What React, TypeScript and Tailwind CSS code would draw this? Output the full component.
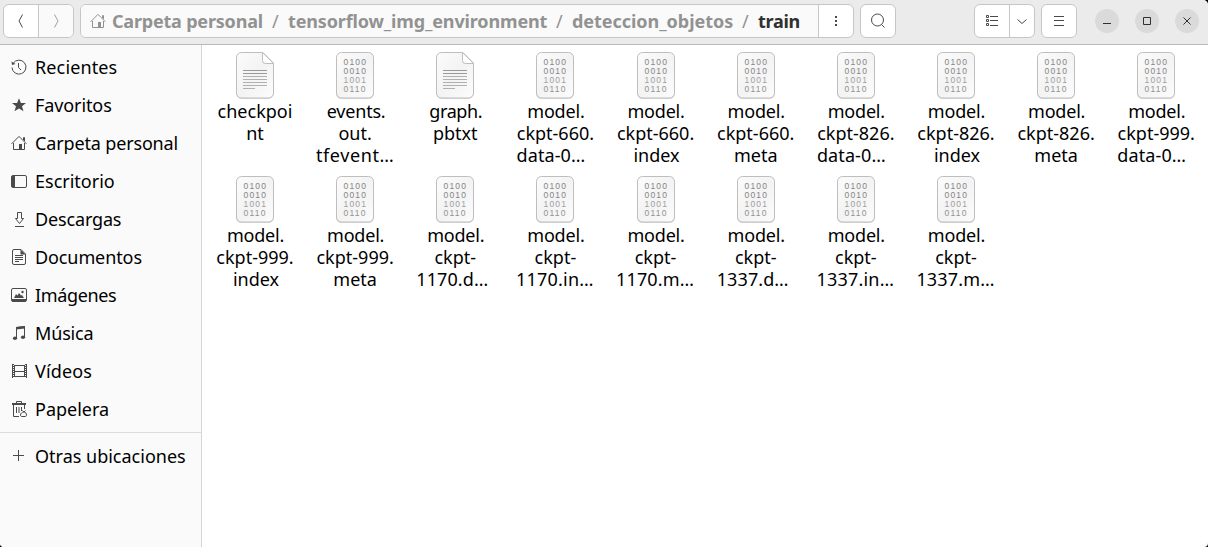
import type { ReactNode } from "react";

function Icon({ children, className = "text-[#4a4a4a]" }: { children: ReactNode; className?: string }) {
  return (
    <svg width="16" height="16" viewBox="0 0 16 16" fill="none" stroke="currentColor" className={`shrink-0 ${className}`}>
      {children}
    </svg>
  );
}

const home = (
  <>
    <path d="M.6 8.8 8 1.4l7.4 7.4M2.500 8v6.500h11V8M12.500 5V2.500h1V6" />
    <path d="M8 9h3v5H8z" fill="currentColor" stroke="none" />
  </>
);

const places: { label: string; tracking: string; icon: ReactNode }[] = [
  {
    label: "Recientes",
    tracking: "tracking-[0.13px]",
    icon: (
      <>
        <path d="M2.200 4.200A7 7 0 1 1 1 8.500" />
        <path d="M.5 2.500 1 6l3.500-1z" fill="currentColor" stroke="none" />
        <path d="M7.500 4v4.500L10 11" />
      </>
    ),
  },
  {
    label: "Favoritos",
    tracking: "tracking-[-0.1px]",
    icon: <path d="m8 1.200 1.900 4.800 5.100.1-4 3.200 1.500 5L8 11.400l-4.500 2.900 1.500-5-4-3.200 5.100-.1z" fill="currentColor" stroke="none" />,
  },
  { label: "Carpeta personal", tracking: "tracking-[-0.15px]", icon: home },
  {
    label: "Escritorio",
    tracking: "tracking-[0px]",
    icon: (
      <>
        <rect x=".5" y="2.500" width="15" height="12" rx="1.500" />
        <path d="M1 3h3v11H1z" fill="currentColor" stroke="none" />
      </>
    ),
  },
  { label: "Descargas", tracking: "tracking-[-0.15px]", icon: <path d="M6.500 1.500h4v6h2l-4 5-4-5h2zM4 15.500h9" /> },
  {
    label: "Documentos",
    tracking: "tracking-[-0.1px]",
    icon: (
      <>
        <path d="M3 .5h7l4.500 4.500v9a1.500 1.500 0 0 1-1.500 1.500H3A1.500 1.500 0 0 1 1.500 14V2A1.500 1.500 0 0 1 3 .5zM4 6.500h8M4 8.500h8M4 10.500h8M4 12.500h4" />
        <path d="M9.500.5v5h5z" fill="currentColor" stroke="none" />
      </>
    ),
  },
  {
    label: "Imágenes",
    tracking: "tracking-[-0.35px]",
    icon: (
      <>
        <rect x=".5" y="1.500" width="15" height="13" rx="1.500" />
        <path d="M1 12h14v2.500H1zM3 11l2-4 1.500 1.500L8 6l2 2.500L11 8l2 3z" fill="currentColor" stroke="none" />
        <circle cx="11.500" cy="5" r="1.200" fill="currentColor" stroke="none" />
      </>
    ),
  },
  {
    label: "Música",
    tracking: "tracking-[-0.15px]",
    icon: (
      <>
        <path d="M5.500 13V2.500l8-1V12" />
        <path d="M5 2l9-1v2.500L5 4.500z" fill="currentColor" stroke="none" />
        <ellipse cx="4" cy="13.300" rx="2.100" ry="1.800" fill="currentColor" stroke="none" />
        <ellipse cx="12" cy="12.300" rx="2.100" ry="1.800" fill="currentColor" stroke="none" />
      </>
    ),
  },
  {
    label: "Vídeos",
    tracking: "tracking-[0.15px]",
    icon: (
      <>
        <path d="M3.500 2v12M13.500 2v12M3 2.500h11M3 8.500h11M3 13.500h11" />
        <path d="M1.500 1v14M15.500 1v14" />
        <path d="M2.500 1v14M14.500 1v14" strokeDasharray="1 1" />
      </>
    ),
  },
  {
    label: "Papelera",
    tracking: "tracking-[0px]",
    icon: (
      <>
        <path d="M5.500 2V.5h5V2M2.500 4v11.500H8M13.500 4v4M5.500 6v6M8 6v6M10.500 6v4" />
        <path d="M1 2h14v2H1z" fill="currentColor" stroke="none" />
        <path d="M11.500 9.500 13 11l1.500-1.500M13 11c-2 0-3.500 1.500-3.500 3 0 1 .5 1.500 1.500 1.500h3c1 0 1.500-.5 1.500-1.500 0-1.500-1-3-2.500-3z" />
      </>
    ),
  },
];

type Kind = "text" | "bin";
const files: { kind: Kind; lines: string[] }[] = [
  { kind: "text", lines: ["checkpoi", "nt"] },
  { kind: "bin", lines: ["events.", "out.", "tfevent…"] },
  { kind: "text", lines: ["graph.", "pbtxt"] },
  { kind: "bin", lines: ["model.", "ckpt-660.", "data-0…"] },
  { kind: "bin", lines: ["model.", "ckpt-660.", "index"] },
  { kind: "bin", lines: ["model.", "ckpt-660.", "meta"] },
  { kind: "bin", lines: ["model.", "ckpt-826.", "data-0…"] },
  { kind: "bin", lines: ["model.", "ckpt-826.", "index"] },
  { kind: "bin", lines: ["model.", "ckpt-826.", "meta"] },
  { kind: "bin", lines: ["model.", "ckpt-999.", "data-0…"] },
  { kind: "bin", lines: ["model.", "ckpt-999.", "index"] },
  { kind: "bin", lines: ["model.", "ckpt-999.", "meta"] },
  { kind: "bin", lines: ["model.", "ckpt-", "1170.d…"] },
  { kind: "bin", lines: ["model.", "ckpt-", "1170.in…"] },
  { kind: "bin", lines: ["model.", "ckpt-", "1170.m…"] },
  { kind: "bin", lines: ["model.", "ckpt-", "1337.d…"] },
  { kind: "bin", lines: ["model.", "ckpt-", "1337.in…"] },
  { kind: "bin", lines: ["model.", "ckpt-", "1337.m…"] },
];

const lineStyle: Record<string, string> = {
  "data-0…": "pr-[9px] tracking-[0.1px]",
  "1170.d…": "pr-[6px] tracking-[0.1px]",
  "1337.d…": "pr-[6px] tracking-[0.1px]",
  "1170.in…": "pr-px tracking-[0.2px]",
  "1337.in…": "pr-px tracking-[0.2px]",
  "1170.m…": "pr-px tracking-[0.15px]",
  "1337.m…": "pr-px tracking-[0.15px]",
  "tfevent…": "tracking-[0.6px]",
  "events.": "tracking-[-0.2px] pl-0.5",
  "graph.": "tracking-[-0.4px] pl-px",
  "model.": "tracking-[-0.2px] pl-px",
  index: "pl-0.5",
};

function FileIcon({ kind }: { kind: Kind }) {
  return (
    <svg width="40" height="48" viewBox="0 0 40 48" className="block">
      <defs>
        <linearGradient id="sheet" x1="0" y1="0" x2="1" y2="1">
          <stop offset="0" stopColor="#fcfcfc" />
          <stop offset=".5" stopColor="#f3f3f3" />
          <stop offset="1" stopColor="#fcfcfc" />
        </linearGradient>
      </defs>
      {kind === "text" ? (
        <>
          <path d="M6.500 1.500h21L38.500 12v30a5 5 0 0 1-5 5h-27a5 5 0 0 1-5-5V6.500a5 5 0 0 1 5-5z" fill="#ddd" />
          <path d="M6.500.5H28L38.500 11v30a5 5 0 0 1-5 5h-27a5 5 0 0 1-5-5V5.500a5 5 0 0 1 5-5z" fill="url(#sheet)" stroke="#bebebe" />
          <path d="M27.500.6V8.500a3 3 0 0 0 3 3h7.900z" fill="#fff" stroke="#bebebe" />
          <path d="M8 18.500h24M8 21.500h24" stroke="#999" />
          <path d="M8 24.500h24M8 27.500h24M8 30.500h24M8 33.500h24M8 36.500h12" stroke="#b0b0b0" />
        </>
      ) : (
        <>
          <rect x="1" y="1.500" width="38" height="45.500" rx="5.500" fill="#ddd" />
          <rect x="1.500" y=".5" width="37" height="45.500" rx="5" fill="url(#sheet)" stroke="#bebebe" />
          <g fontFamily="'Liberation Sans', sans-serif" fontSize="8.500" letterSpacing="1.200" fill="#858585">
            <text x="8.500" y="13">0100</text>
            <text x="8.500" y="22">0010</text>
            <text x="8.500" y="31" fill="#a0a0a0">1001</text>
            <text x="8.500" y="40" fill="#929292">0110</text>
          </g>
        </>
      )}
    </svg>
  );
}

const box = "flex h-[34px] rounded-[6px] border border-[#c6c6c6] bg-white";

export default function App() {
  return (
    <div className="bg-black">
      <div className="flex h-[547px] w-[1208px] flex-col overflow-hidden rounded-bl-[4px] rounded-br-[4px] rounded-tr-[5px] bg-white font-['Noto_Sans',sans-serif] text-[18px] text-black">
        <header className="flex h-[45px] shrink-0 items-start border-b border-[#b9b9b9] bg-[#ebebeb] pl-[3px] pr-[9px] pt-1">
          <div className={`${box} w-[71px] overflow-hidden`}>
            <div className="flex w-[35px] items-center justify-center border-r border-[#c6c6c6]">
              <Icon><path d="M9.500 1.500 6 8l3.500 6.500" /></Icon>
            </div>
            <div className="flex flex-1 items-center justify-center bg-[#fafafa]">
              <Icon className="text-[#a0a0a0]"><path d="M6.500 1.500 10 8l-3.500 6.500" /></Icon>
            </div>
          </div>
          <div className={`${box} ml-[6px] w-[774px] overflow-hidden`}>
            <div className="flex flex-1 items-center whitespace-pre bg-[#fafafa] pl-[9px] font-bold text-[#929292]">
              <Icon className="text-[#929292]">{home}</Icon>
              <span className="ml-[6px] w-[160px] tracking-[-0.2px]">Carpeta personal</span>
              <span className="w-4 font-normal">/</span>
              <span className="w-[268px] tracking-[-0.14px]">tensorflow_img_environment</span>
              <span className="w-4 font-normal">/</span>
              <span className="w-[170px] tracking-[-0.04px]">deteccion_objetos</span>
              <span className="w-4 font-normal">/</span>
              <span className="tracking-[-0.3px] text-[#303030]">train</span>
            </div>
            <div className="flex w-[35px] items-center justify-center border-l border-[#c6c6c6]">
              <Icon><path d="M7 3h2v2H7zM7 7h2v2H7zM7 11h2v2H7z" fill="currentColor" stroke="none" /></Icon>
            </div>
          </div>
          <div className={`${box} ml-[6px] w-9 items-center justify-center`}>
            <Icon><circle cx="7.500" cy="7" r="6" /><path d="m11.500 11.500 3 3" /></Icon>
          </div>
          <div className={`${box} ml-auto w-[61px]`}>
            <div className="flex w-[35px] items-center justify-center border-r border-[#c6c6c6]">
              <Icon><path d="M2.500 2.500h2v2h-2zM2.500 6.500h2v2h-2zM2.500 10.500h2v2h-2zM6 3.500h8M6 7.500h8M6 12.500h8" /></Icon>
            </div>
            <div className="flex flex-1 items-center justify-center">
              <Icon><path d="m3.500 6.500 4.500 4 4.500-4" /></Icon>
            </div>
          </div>
          <div className={`${box} ml-[6px] w-9 items-center justify-center`}>
            <Icon><path d="M3 3.500h10M3 7.500h10M3 12.500h10" /></Icon>
          </div>
          <div className="ml-[18px] mt-[5px] flex gap-4">
            {["M4 10.500h8", "M4.500 4.500h7v7h-7z", "m4.500 4.500 7 7m0-7-7 7"].map((d) => (
              <div key={d} className="flex size-6 items-center justify-center rounded-full bg-[#dadada]">
                <Icon className="text-[#303030]"><path d={d} /></Icon>
              </div>
            ))}
          </div>
        </header>
        <div className="flex min-h-0 flex-1">
          <aside className="flex w-[202px] shrink-0 flex-col border-r border-[#d5d5d5] bg-[#fafafa] pt-[3px]">
            {places.map((p) => (
              <div key={p.label} className="flex h-[38px] items-center pl-[11px]">
                <Icon>{p.icon}</Icon>
                <span className={`ml-2 whitespace-nowrap ${p.tracking}`}>{p.label}</span>
              </div>
            ))}
            <div className="mt-1 border-t border-[#dcdcdc]" />
            <div className="mt-1 flex h-[38px] items-center pl-[11px]">
              <Icon><path d="M7.500 2v11M2 7.500h11" /></Icon>
              <span className="ml-2 whitespace-nowrap">Otras ubicaciones</span>
            </div>
          </aside>
          <main className="grid flex-1 auto-rows-[124px] grid-cols-[repeat(10,100.15px)] content-start pl-[2.925px] pt-[7px]">
            {files.map((f, i) => (
              <div key={i} className="flex flex-col items-center">
                <FileIcon kind={f.kind} />
                <div className="flex flex-col items-center text-center leading-[22px]">
                  {f.lines.map((l) => (
                    <span key={l} className={`whitespace-nowrap ${lineStyle[l] ?? ""}`}>{l}</span>
                  ))}
                </div>
              </div>
            ))}
          </main>
        </div>
      </div>
    </div>
  );
}
